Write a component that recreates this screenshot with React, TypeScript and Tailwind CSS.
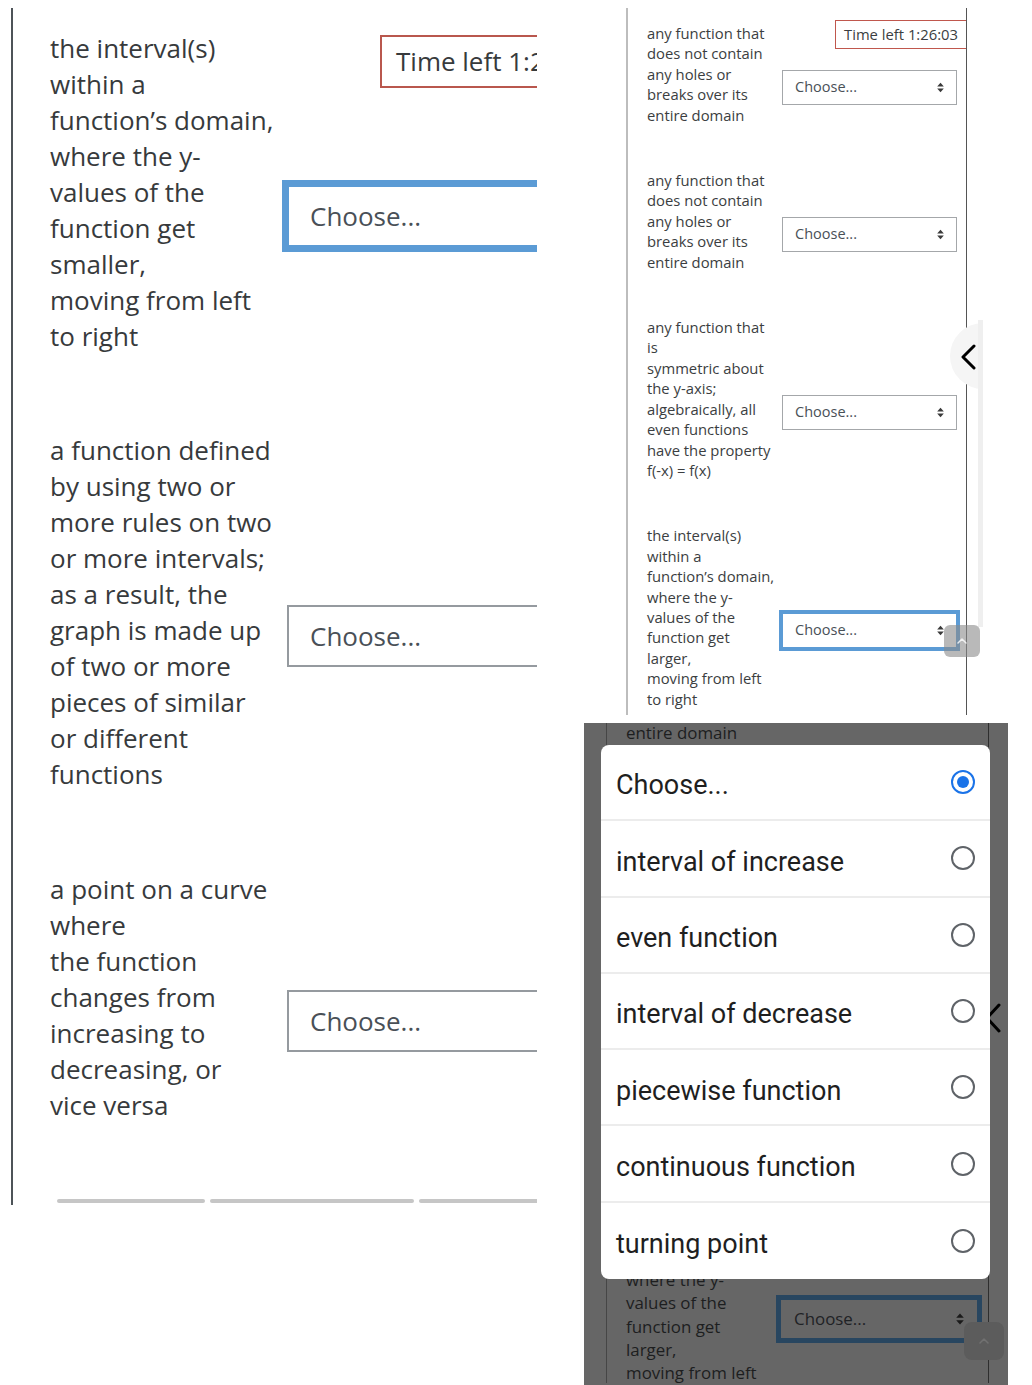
import type { ReactNode } from 'react';

type Row = { lines: string[]; focused?: boolean };

const leftRows: Row[] = [
  {
    lines: [
      'the interval(s)',
      'within a',
      'function’s domain,',
      'where the y-',
      'values of the',
      'function get',
      'smaller,',
      'moving from left',
      'to right',
    ],
    focused: true,
  },
  {
    lines: [
      'a function defined',
      'by using two or',
      'more rules on two',
      'or more intervals;',
      'as a result, the',
      'graph is made up',
      'of two or more',
      'pieces of similar',
      'or different',
      'functions',
    ],
  },
  {
    lines: [
      'a point on a curve',
      'where',
      'the function',
      'changes from',
      'increasing to',
      'decreasing, or',
      'vice versa',
    ],
  },
];

const rightRows: Row[] = [
  {
    lines: ['any function that', 'does not contain', 'any holes or', 'breaks over its', 'entire domain'],
  },
  {
    lines: ['any function that', 'does not contain', 'any holes or', 'breaks over its', 'entire domain'],
  },
  {
    lines: [
      'any function that',
      'is',
      'symmetric about',
      'the y-axis;',
      'algebraically, all',
      'even functions',
      'have the property',
      'f(-x) = f(x)',
    ],
  },
  {
    lines: [
      'the interval(s)',
      'within a',
      'function’s domain,',
      'where the y-',
      'values of the',
      'function get',
      'larger,',
      'moving from left',
      'to right',
    ],
    focused: true,
  },
];

const options = [
  'Choose...',
  'interval of increase',
  'even function',
  'interval of decrease',
  'piecewise function',
  'continuous function',
  'turning point',
];

const Lines = ({ lines }: { lines: string[] }) => (
  <>
    {lines.map((line, i) => (
      <div key={i} className="whitespace-nowrap">
        {line}
      </div>
    ))}
  </>
);

const UpDown = ({ className }: { className?: string }) => (
  <svg viewBox="0 0 8 12" className={className} fill="currentColor">
    <path d="M4 0.5 L7.8 4.8 H0.2 Z" />
    <path d="M4 11.5 L7.8 7.2 H0.2 Z" />
  </svg>
);

const Chevron = ({ points, className, width = 3 }: { points: string; className?: string; width?: number }) => (
  <svg className={className} fill="none" stroke="currentColor" strokeWidth={width} strokeLinecap="round" strokeLinejoin="round">
    <polyline points={points} />
  </svg>
);

const LeftPanel = () => (
  <div className="relative h-[1210px] w-[537px] shrink-0 overflow-hidden">
    <div className="ml-[11px] mt-[8px] h-[1197px] border-l-2 border-[#4d5358] pl-[37px] pt-[22px] text-[26px] leading-[36px] text-[#373a3c]">
      {leftRows.map((row, i) => (
        <div key={i} className={`flex items-center ${i === 0 ? '' : i === 1 ? 'mt-[30px]' : 'mt-[31px]'}`}>
          <div className="w-[237px] shrink-0 pb-[48px]">
            <Lines lines={row.lines} />
          </div>
          <div
            className={`flex h-[62px] w-[320px] shrink-0 items-center border-2 bg-white pl-[21px] text-[#495057] ${
              row.focused ? 'border-[#5b9bd5] ring-[5px] ring-[#5b9bd5]' : 'border-[#959a9f]'
            }`}
          >
            Choose...
          </div>
        </div>
      ))}

      {/* progress strip under the question */}
      <div className="ml-[7px] mt-[28px] flex gap-[5px]">
        <div className="h-[4px] w-[148px] shrink-0 rounded-sm bg-[#c6c6c6]" />
        <div className="h-[4px] w-[204px] shrink-0 rounded-sm bg-[#c6c6c6]" />
        <div className="h-[4px] w-[200px] shrink-0 rounded-sm bg-[#c6c6c6]" />
      </div>
    </div>

    <div className="absolute left-[380px] top-[35px] flex h-[53px] items-center whitespace-nowrap border-2 border-[#b9574d] bg-white px-[14px] text-[26px] text-[#373a3c]">
      Time left 1:26:03
    </div>
  </div>
);

const SmallSelect = ({ focused }: { focused?: boolean }) => (
  <div
    className={`flex h-[35px] w-[175px] shrink-0 items-center justify-between border bg-white pl-[12px] pr-[12px] text-[14.5px] text-[#495057] ${
      focused ? 'border-[#5b9bd5] ring-[3px] ring-[#5b9bd5]' : 'border-[#a4a7aa]'
    }`}
  >
    <span>Choose...</span>
    <UpDown className="h-[11px] w-[7px] text-[#3a3a3a]" />
  </div>
);

const TopRightPanel = () => (
  <div className="relative ml-[36px] h-[715px] w-[363px] overflow-hidden bg-white">
    <div className="relative ml-[6px] mt-[8px] h-[707px] w-[341px] border-l-2 border-r border-l-[#bdbdbd] border-r-[#555] pl-[19px] pt-[15px] text-[14.8px] leading-[20.4px] text-[#3b3e41]">
      {rightRows.map((row, i) => (
        <div key={i} className={`flex items-center ${i === 0 ? '' : 'mt-[18px]'}`}>
          <div className="w-[135px] shrink-0 pb-[27px]">
            <Lines lines={row.lines} />
          </div>
          <SmallSelect focused={row.focused} />
        </div>
      ))}

      <div className="absolute right-0 top-[12px] flex h-[29px] items-center whitespace-nowrap border border-r-0 border-[#c0574d] bg-white px-[8px] text-[14.8px] text-[#3b3e41]">
        Time left 1:26:03
      </div>
    </div>

    <div className="absolute left-[330px] top-[323px] h-[66px] w-[66px] rounded-full bg-[#f5f5f5]" />
    <div className="absolute left-[358px] top-[320px] h-[307px] w-[5px] bg-[#efefef]" />
    <Chevron points="13,3 2,14 13,25" className="absolute left-[341px] top-[343px] h-[28px] w-[16px] text-black" />
    <div className="absolute left-[324px] top-[625px] flex h-[32px] w-[36px] items-center justify-center rounded-md bg-[#8a8a8a]/60">
      <Chevron points="1,6 5,2 9,6" width={1.5} className="h-[8px] w-[10px] text-white/80" />
    </div>
  </div>
);

const Radio = ({ checked }: { checked?: boolean }) =>
  checked ? (
    <div className="flex h-[24px] w-[24px] items-center justify-center rounded-full border-[2.5px] border-[#1a73e8]">
      <div className="h-[12px] w-[12px] rounded-full bg-[#1a73e8]" />
    </div>
  ) : (
    <div className="h-[24px] w-[24px] rounded-full border-2 border-[#5f6368]" />
  );

const BottomPanel = () => (
  <div className="relative mt-[8px] h-[662px] w-[424px] overflow-hidden bg-[#666666]">
    <div className="ml-[22px] h-full w-[383px] border-l border-r border-l-[#464646] border-r-[#2e2e2e] pl-[19px] text-[16.9px] leading-[23.3px] text-[#1d1e1f]">
      <div className="-mt-[2px] whitespace-nowrap">entire domain</div>
      <div className="mt-[454px] flex items-center">
        <div className="w-[154px] shrink-0 pb-[31px]">
          <Lines lines={rightRows[3].lines} />
        </div>
        <div className="flex h-[40px] w-[198px] shrink-0 items-center justify-between border border-[#284660] pl-[13px] pr-[13px] text-[#1f2225] ring-[4px] ring-[#284660]">
          <span>Choose...</span>
          <UpDown className="h-[12px] w-[8px] text-[#1a1a1a]" />
        </div>
      </div>
    </div>

    <div className="absolute left-[380px] top-[599px] flex h-[38px] w-[40px] items-center justify-center rounded-lg bg-[#5c5c5c]">
      <Chevron points="1,6 5,2 9,6" width={1.5} className="h-[8px] w-[10px] text-[#717171]" />
    </div>
    <Chevron points="14,2 2,15 14,28" className="absolute left-[401px] top-[280px] h-[30px] w-[17px] text-black" />

    {/* native select sheet */}
    <div className="absolute left-[17px] top-[22px] w-[389px] overflow-hidden rounded-[8px] bg-white font-['Roboto',sans-serif] text-[27px] text-[#1f1f1f]">
      {options.map((option, i) => (
        <div
          key={option}
          className={`flex h-[76.3px] items-center justify-between pl-[15px] pr-[15px] ${
            i < options.length - 1 ? 'border-b-2 border-[#ececec]' : ''
          }`}
        >
          <span className="pt-[7px]">{option}</span>
          <Radio checked={i === 0} />
        </div>
      ))}
    </div>
  </div>
);

const Frame = ({ children }: { children: ReactNode }) => (
  <div className="flex h-[1385px] w-[1032px] items-start overflow-hidden bg-white font-['Open_Sans',sans-serif]">
    {children}
  </div>
);

export default function App() {
  return (
    <Frame>
      <LeftPanel />
      <div className="ml-[47px] flex w-[424px] shrink-0 flex-col">
        <TopRightPanel />
        <BottomPanel />
      </div>
    </Frame>
  );
}
